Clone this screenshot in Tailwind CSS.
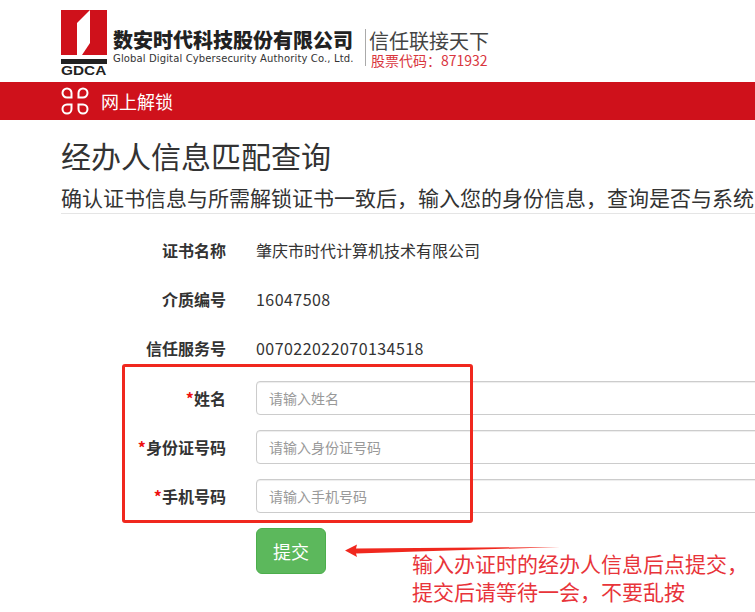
<!DOCTYPE html>
<html lang="en">
<head>
    <meta charset="UTF-8">
    <title>网上解锁</title>
    <script src="https://cdn.jsdelivr.net/npm/@tailwindcss/browser@4"></script>
</head>
<body class="bg-white overflow-hidden font-['Noto_Sans_CJK_SC','Liberation_Sans',sans-serif] text-[#333]">
<div class="relative w-[755px] h-[612px] overflow-hidden">
    <!-- header -->
    <header class="h-[82px] flex pl-[61px] pt-[10px]">
        <div class="w-[46px] shrink-0">
            <svg class="block w-[46px] h-[54px]" viewBox="0 0 46 54">
                <rect width="46" height="45" fill="#cf111b"/>
                <path d="M29 0L16 13V45H21L29 33Z" fill="#fff"/>
                <rect y="49" width="46" height="5" fill="#222"/>
            </svg>
            <div class="mt-[1px] text-[12px] leading-[13px] font-bold text-[#222] font-['Liberation_Sans'] origin-left scale-x-[1.28]">GDCA</div>
        </div>
        <div class="ml-[6px] mt-[18px] w-[244px]">
            <div class="text-[20px] leading-[24px] font-black text-[#222] whitespace-nowrap">数安时代科技股份有限公司</div>
            <div class="text-[10px] leading-[12px] mt-[1px] text-[#333] whitespace-nowrap font-['DejaVu_Sans'] tracking-[0.13px]">Global Digital Cybersecurity Authority Co., Ltd.</div>
        </div>
        <div class="ml-[8px] mt-[19px] h-[37px] border-l border-[#aaa] pl-[3px]">
            <div class="text-[20px] leading-[24px] text-[#444] whitespace-nowrap">信任联接天下</div>
            <div class="text-[14px] leading-[15px] text-[#d9363e] pl-[2px] whitespace-nowrap">股票代码：871932</div>
        </div>
    </header>
    <div class="h-[38px] bg-[#cf111b] flex items-center pl-[61px] text-white">
        <svg class="w-[28px] h-[28px]" viewBox="0 0 28 28" fill="none" stroke="#fff" stroke-width="2">
            <path d="M10.5 10.5H6a4.5 4.5 0 1 1 4.5-4.5Z"/>
            <path d="M17.5 10.5H22a4.5 4.5 0 1 0-4.5-4.5Z"/>
            <path d="M10.5 17.5H6a4.5 4.5 0 1 0 4.5 4.5Z"/>
            <path d="M17.5 17.5H22a4.5 4.5 0 1 1-4.5 4.5Z"/>
        </svg>
        <span class="ml-[12px] text-[18px]">网上解锁</span>
    </div>

    <main class="pl-[61px]">
        <h1 class="mt-[13px] text-[30px] leading-[44px] whitespace-nowrap">经办人信息匹配查询</h1>
        <p class="mt-[4px] h-[33px] leading-[33px] text-[21px] whitespace-nowrap border-b border-[#e5e5e5]">确认证书信息与所需解锁证书一致后，输入您的身份信息，查询是否与系统</p>

        <div class="mt-[11px] flex flex-col">
            <div class="h-[49px] flex items-center">
                <label class="w-[165px] shrink-0 text-right font-bold text-[16px]">证书名称</label>
                <span class="ml-[30px] text-[16px]">肇庆市时代计算机技术有限公司</span>
            </div>
            <div class="h-[49px] flex items-center">
                <label class="w-[165px] shrink-0 text-right font-bold text-[16px]">介质编号</label>
                <span class="ml-[30px] text-[16px] tracking-[0.45px]">16047508</span>
            </div>
            <div class="h-[49px] flex items-center">
                <label class="w-[165px] shrink-0 text-right font-bold text-[16px]">信任服务号</label>
                <span class="ml-[30px] text-[16px] tracking-[0.45px]">007022022070134518</span>
            </div>
            <div class="mt-[1px] h-[49px] flex items-center">
                <label class="w-[165px] shrink-0 text-right font-bold text-[16px]"><span class="text-[#e11]">*</span>姓名</label>
                <input class="ml-[30px] w-[600px] shrink-0 h-[34px] px-[12px] text-[14px] border border-[#ccc] rounded shadow-[inset_0_1px_1px_rgba(0,0,0,0.075)] placeholder:text-[#999]" placeholder="请输入姓名">
            </div>
            <div class="h-[49px] flex items-center">
                <label class="w-[165px] shrink-0 text-right font-bold text-[16px]"><span class="text-[#e11]">*</span>身份证号码</label>
                <input class="ml-[30px] w-[600px] shrink-0 h-[34px] px-[12px] text-[14px] border border-[#ccc] rounded shadow-[inset_0_1px_1px_rgba(0,0,0,0.075)] placeholder:text-[#999]" placeholder="请输入身份证号码">
            </div>
            <div class="h-[49px] flex items-center">
                <label class="w-[165px] shrink-0 text-right font-bold text-[16px]"><span class="text-[#e11]">*</span>手机号码</label>
                <input class="ml-[30px] w-[600px] shrink-0 h-[34px] px-[12px] text-[14px] border border-[#ccc] rounded shadow-[inset_0_1px_1px_rgba(0,0,0,0.075)] placeholder:text-[#999]" placeholder="请输入手机号码">
            </div>
        </div>
        <button class="mt-[8px] ml-[195px] w-[70px] h-[46px] bg-[#5cb85c] border border-[#4cae4c] rounded-md text-white text-[18px]">提交</button>
    </main>

    <!-- annotation drawn over the screenshot -->
    <div class="absolute left-[122px] top-[364px] w-[351px] h-[159px] border-[3px] border-[#f0281e] rounded-[3px]"></div>
    <svg class="absolute left-[340px] top-[535px] w-[230px] h-[30px]" viewBox="0 0 230 30">
        <path d="M5 15.5L17 9.5L16 13.5L220 12L16 18.5L17 22Z" fill="#f0281e"/>
    </svg>
    <div class="absolute left-[412px] top-[549px] text-[21px] leading-[28px] text-[#e8343a] whitespace-nowrap">输入办证时的经办人信息后点提交，<br>提交后请等待一会，不要乱按</div>
</div>
</body>
</html>
